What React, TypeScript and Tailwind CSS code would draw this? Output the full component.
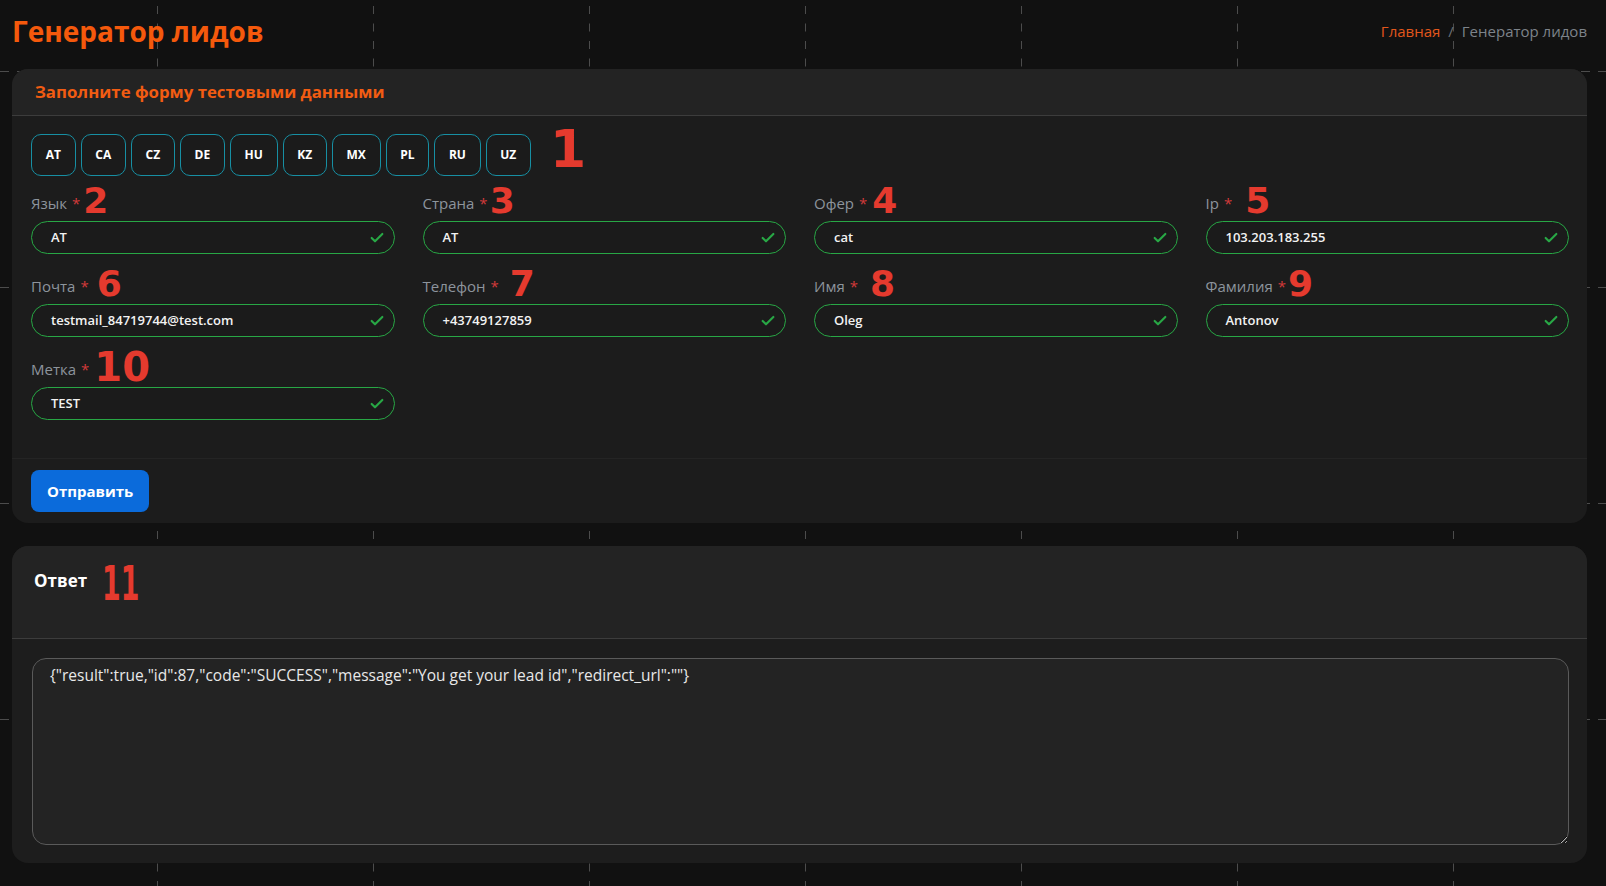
import React from 'react';
import { Check } from 'lucide-react';

const countries = ['AT', 'CA', 'CZ', 'DE', 'HU', 'KZ', 'MX', 'PL', 'RU', 'UZ'];

type Field = { label: string; value: string; note: string; gap: string; big?: boolean };

const fields: Field[] = [
  { label: 'Язык', value: 'AT', note: '2', gap: 'ml-[3px]' },
  { label: 'Страна', value: 'AT', note: '3', gap: 'ml-[2px]' },
  { label: 'Офер', value: 'cat', note: '4', gap: 'ml-[5px]' },
  { label: 'Ip', value: '103.203.183.255', note: '5', gap: 'ml-[13px]' },
  { label: 'Почта', value: 'testmail_84719744@test.com', note: '6', gap: 'ml-[8px]' },
  { label: 'Телефон', value: '+43749127859', note: '7', gap: 'ml-[11px]' },
  { label: 'Имя', value: 'Oleg', note: '8', gap: 'ml-[12px]' },
  { label: 'Фамилия', value: 'Antonov', note: '9', gap: 'ml-[2px]' },
  { label: 'Метка', value: 'TEST', note: '10', gap: 'ml-[5px]', big: true },
];

const vLines = [157, 373, 589, 805, 1021, 1237, 1453];
const hLines = [71, 287, 503, 719];

// dashed grid behind the page
const GridBackdrop = () => (
  <svg className="pointer-events-none absolute inset-0 h-full w-full" xmlns="http://www.w3.org/2000/svg">
    {vLines.map((x) => (
      <line key={'v' + x} x1={x + 0.5} y1={6} x2={x + 0.5} y2={900} stroke="#4c4c4c" strokeWidth={1} strokeDasharray="8 9.5" />
    ))}
    {hLines.map((y) => (
      <line key={'h' + y} x1={0} y1={y + 0.5} x2={1606} y2={y + 0.5} stroke="#4c4c4c" strokeWidth={1} strokeDasharray="9 8" />
    ))}
  </svg>
);

const note = "font-['DejaVu_Sans',sans-serif] font-bold text-[#e53a2e] leading-[0px]";

const FieldBox: React.FC<{ field: Field }> = ({ field }) => (
  <div>
    <div className="flex h-[20px] items-center text-[15px] text-[#8d949c]">
      <span>{field.label}</span>
      <span className="ml-[5px] text-[#d23a3a]">*</span>
      <span className={`${note} ${field.gap} ${field.big ? 'text-[40px]' : 'text-[36px]'} -translate-y-[2px]`}>
        {field.note}
      </span>
    </div>
    <div className="mt-[8px] flex h-[33px] items-center rounded-full border border-[#28a745] bg-[#1b1b1b] pl-[19px] pr-[9px]">
      <span className="flex-1 text-[13px] font-semibold text-[#f2f2f2]">{field.value}</span>
      <Check size={16} strokeWidth={3.2} className="text-[#28a745]" />
    </div>
  </div>
);

export default function App() {
  return (
    <div className="relative min-h-screen overflow-hidden bg-[#111111] font-['Open_Sans',sans-serif]">
      <GridBackdrop />
      <div className="relative ml-[12px] mr-[19px]">
        <div className="flex h-[62px] items-center justify-between">
          <h1 className="text-[28px] font-bold leading-[36px] text-[#f5590c]">Генератор лидов</h1>
          <div className="flex items-center gap-[8px] text-[15px]">
            <span className="text-[#e2571c]">Главная</span>
            <span className="text-[#6b6f75]">/</span>
            <span className="text-[#7d838a]">Генератор лидов</span>
          </div>
        </div>

        <div className="mt-[7px] overflow-hidden rounded-[16px] bg-[#1c1c1c]">
          <div className="flex h-[47px] items-center border-b border-[#3c3c3c] bg-[#232323] pl-[23px]">
            <span className="text-[16.8px] font-bold text-[#f25c12]">Заполните форму тестовыми данными</span>
          </div>

          <div className="pb-[38px] pl-[19px] pr-[18px] pt-[18px]">
            <div className="flex items-center gap-[5px]">
              {countries.map((c) => (
                <button
                  key={c}
                  className="h-[42px] rounded-[10px] border border-[#178fa3] bg-[#1b1b1b] px-[13.7px] text-[12px] font-bold text-white"
                >
                  {c}
                </button>
              ))}
              <span className={`${note} ml-[14px] text-[52px] -translate-y-[6px]`}>1</span>
            </div>

            <div className="mt-[17px] grid grid-cols-4 gap-x-[28px] gap-y-[22px]">
              {fields.map((f) => (
                <FieldBox key={f.label} field={f} />
              ))}
            </div>
          </div>

          <div className="border-t border-[#242424] px-[19px] pb-[11px] pt-[11px]">
            <button className="h-[42px] rounded-[8px] bg-[#0b6bdb] px-[16px] text-[15px] font-bold text-white">
              Отправить
            </button>
          </div>
        </div>

        <div className="mt-[23px] overflow-hidden rounded-[16px] bg-[#1d1d1d]">
          <div className="flex h-[93px] items-start border-b border-[#3c3c3c] bg-[#232323] pl-[22px] pt-[25px]">
            <span className="text-[17px] font-bold leading-[20px] text-white">Ответ</span>
            <span className={`${note} ml-[15px] mt-[12px] origin-left scale-x-[0.62] font-['DejaVu_Sans_Condensed','DejaVu_Sans',sans-serif] text-[48px]`}>
              11
            </span>
          </div>
          <div className="pb-[18px] pl-[20px] pr-[18px] pt-[19px]">
            <textarea
              readOnly
              value={'{"result":true,"id":87,"code":"SUCCESS","message":"You get your lead id","redirect_url":""}'}
              className="block h-[187px] w-full rounded-[14px] border border-[#5a5a5a] bg-[#232323] px-[17px] pt-[5px] text-[15.5px] text-[#e8e8e8] outline-none"
            />
          </div>
        </div>
      </div>
    </div>
  );
}
